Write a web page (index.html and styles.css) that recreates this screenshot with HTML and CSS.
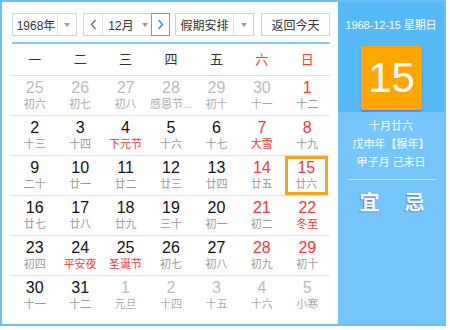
FILE: index.html
```html
<!DOCTYPE html>
<html lang="zh-CN">
<head>
<meta charset="utf-8">
<link rel="stylesheet" href="styles.css">
</head>
<body>
<div class="cal">
  <div class="main">
    <div class="toolbar">
      <div class="sel year"><span class="val">1968年</span><span class="arr"><i></i></span></div>
      <div class="mgroup">
        <span class="nav prev"><svg width="7" height="11" viewBox="0 0 7 11"><polyline points="5.5,1 1.5,5.5 5.5,10" fill="none" stroke="#666" stroke-width="1.2"/></svg></span>
        <span class="mval">12月<i></i></span>
        <span class="nav next"><svg width="7" height="11" viewBox="0 0 7 11"><polyline points="1.5,1 5.5,5.5 1.5,10" fill="none" stroke="#2a8ef0" stroke-width="1.4"/></svg></span>
      </div>
      <div class="sel holiday"><span class="val">假期安排</span><span class="arr"><i></i></span></div>
      <div class="today">返回今天</div>
    </div>
    <div class="bar"></div>
    <div class="weekhead">
      <span>一</span><span>二</span><span>三</span><span>四</span><span>五</span><span class="we">六</span><span class="we">日</span>
    </div>
    <div class="grid">
      <div class="row">
        <div class="cell other"><b>25</b><small>初六</small></div>
        <div class="cell other"><b>26</b><small>初七</small></div>
        <div class="cell other"><b>27</b><small>初八</small></div>
        <div class="cell other"><b>28</b><small>感恩节...</small></div>
        <div class="cell other"><b>29</b><small>初十</small></div>
        <div class="cell other"><b>30</b><small>十一</small></div>
        <div class="cell we"><b>1</b><small>十二</small></div>
      </div>
      <div class="row">
        <div class="cell"><b>2</b><small>十三</small></div>
        <div class="cell"><b>3</b><small>十四</small></div>
        <div class="cell"><b>4</b><small class="fest">下元节</small></div>
        <div class="cell"><b>5</b><small>十六</small></div>
        <div class="cell"><b>6</b><small>十七</small></div>
        <div class="cell we"><b>7</b><small class="fest">大雪</small></div>
        <div class="cell we"><b>8</b><small>十九</small></div>
      </div>
      <div class="row">
        <div class="cell"><b>9</b><small>二十</small></div>
        <div class="cell"><b>10</b><small>廿一</small></div>
        <div class="cell"><b>11</b><small>廿二</small></div>
        <div class="cell"><b>12</b><small>廿三</small></div>
        <div class="cell"><b>13</b><small>廿四</small></div>
        <div class="cell we"><b>14</b><small>廿五</small></div>
        <div class="cell we sel-day"><b>15</b><small>廿六</small></div>
      </div>
      <div class="row">
        <div class="cell"><b>16</b><small>廿七</small></div>
        <div class="cell"><b>17</b><small>廿八</small></div>
        <div class="cell"><b>18</b><small>廿九</small></div>
        <div class="cell"><b>19</b><small>三十</small></div>
        <div class="cell"><b>20</b><small>初一</small></div>
        <div class="cell we"><b>21</b><small>初二</small></div>
        <div class="cell we"><b>22</b><small class="fest">冬至</small></div>
      </div>
      <div class="row">
        <div class="cell"><b>23</b><small>初四</small></div>
        <div class="cell"><b>24</b><small class="fest">平安夜</small></div>
        <div class="cell"><b>25</b><small class="fest">圣诞节</small></div>
        <div class="cell"><b>26</b><small>初七</small></div>
        <div class="cell"><b>27</b><small>初八</small></div>
        <div class="cell we"><b>28</b><small>初九</small></div>
        <div class="cell we"><b>29</b><small>初十</small></div>
      </div>
      <div class="row last">
        <div class="cell"><b>30</b><small>十一</small></div>
        <div class="cell"><b>31</b><small>十二</small></div>
        <div class="cell other"><b>1</b><small>元旦</small></div>
        <div class="cell other"><b>2</b><small>十四</small></div>
        <div class="cell other"><b>3</b><small>十五</small></div>
        <div class="cell other"><b>4</b><small>十六</small></div>
        <div class="cell other"><b>5</b><small>小寒</small></div>
      </div>
    </div>
  </div>
  <div class="side">
    <div class="side-top">
      <div class="date">1968-12-15 星期日</div>
      <div class="bigday">15</div>
    </div>
    <div class="side-bottom">
      <div class="lunar">十月廿六</div>
      <div class="lunar">戊申年【猴年】</div>
      <div class="lunar">甲子月 己未日</div>
      <div class="sep"></div>
      <div class="yiji"><span>宜</span><span>忌</span></div>
    </div>
  </div>
</div>
</body>
</html>
```
FILE: styles.css
```css
* { box-sizing: border-box; }
html, body { margin: 0; padding: 0; background: #fff; }
body {
  font-family: "Liberation Sans", "Noto Sans CJK SC", sans-serif;
  color: #333;
}
.cal {
  width: 446px;
  height: 326px;
  border: 2px solid #6cbff7;
  display: flex;
  background: #fff;
}
.main {
  width: 336px;
  padding: 11px 8px 0 10px;
}
.toolbar {
  display: flex;
  height: 23px;
  font-size: 12px;
}
.sel {
  display: flex;
  border: 1px solid #d4d4d4;
  background: #fff;
  height: 23px;
}
.sel .val {
  display: flex;
  align-items: center;
  justify-content: center;
  border-right: 1px solid #e0e0e0;
}
.sel .arr {
  display: flex;
  align-items: center;
  justify-content: center;
  flex: 1;
}
.sel i, .mval i {
  display: inline-block;
  width: 0; height: 0;
  border-left: 3.5px solid transparent;
  border-right: 3.5px solid transparent;
  border-top: 4px solid #999;
}
.year { width: 65px; }
.year .val { width: 45px; padding-left: 2px; }
.mgroup {
  display: flex;
  margin-left: 6px;
  width: 87px;
  height: 23px;
  border: 1px solid #d4d4d4;
  border-right: none;
  position: relative;
}
.nav {
  display: flex;
  align-items: center;
  justify-content: center;
  width: 19px;
}
.prev { border-right: 1px solid #e0e0e0; width: 19px; }
.mval {
  flex: 1;
  display: flex;
  align-items: center;
  justify-content: center;
  gap: 8px;
  padding-left: 2px;
}
.next {
  border: 1px solid #4aa6f2;
  margin: -1px 0;
  height: 23px;
  width: 19px;
}
.holiday { width: 79px; margin-left: 5px; }
.holiday .val { width: 58px; }
.today {
  margin-left: 7px;
  width: 69px;
  height: 23px;
  border: 1px solid #d4d4d4;
  display: flex;
  align-items: center;
  justify-content: center;
}
.bar {
  height: 2px;
  background: #85c9f6;
  margin-top: 6px;
}
.weekhead {
  display: grid;
  grid-template-columns: repeat(7, 1fr);
  height: 32px;
  border-bottom: 1px solid #dedede;
  font-size: 13px;
  line-height: 31px;
  text-align: center;
  color: #333;
}
.weekhead .we { color: #f33; }
.row {
  display: grid;
  grid-template-columns: repeat(7, 1fr);
  height: 40px;
  border-bottom: 1px solid #e0e0e0;
}
.row.last { border-bottom: none; }
.cell {
  text-align: center;
  padding-top: 3px;
}
.cell b {
  display: block;
  font-weight: normal;
  font-size: 16px;
  line-height: 18px;
  color: #111;
}
.cell small {
  display: block;
  font-size: 11px;
  line-height: 14px;
  color: #999;
  white-space: nowrap;
  overflow: hidden;
}
.cell.we b { color: #f33; }
.cell.other b { color: #bbb; }
.cell.other small { color: #aaa; }
.cell small.fest { color: #f33; }
.cell.sel-day {
  border: 3px solid #f9a318;
  padding-top: 0;
  height: 39px;
  margin-right: 2px;
}
.side {
  flex: 1;
  display: flex;
  flex-direction: column;
  color: #fff;
  text-align: center;
}
.side-top {
  background: #56b9f8;
  height: 110px;
  padding-top: 15px;
}
.date {
  font-size: 11px;
  line-height: 16px;
  letter-spacing: -0.1px;
}
.bigday {
  margin: 13px auto 0;
  width: 61px;
  height: 64px;
  background: #ffa602;
  border-radius: 2px;
  box-shadow: 0 2px 2px rgba(90, 90, 210, 0.6);
  font-size: 42px;
  line-height: 64px;
  padding-left: 1px;
}
.side-bottom {
  flex: 1;
  background: #75c5fb;
  padding-top: 5px;
}
.lunar {
  font-size: 11px;
  line-height: 18px;
}
.sep {
  height: 1px;
  background: rgba(255, 255, 255, 0.55);
  margin: 8px 7px 0 9px;
}
.yiji {
  display: flex;
  justify-content: center;
  gap: 25px;
  margin-top: 11px;
  font-size: 20px;
  line-height: 24px;
  font-weight: bold;
  padding-left: 2px;
}
.yiji span { text-shadow: -1px 1px 1px rgba(100, 90, 230, 0.7); }
```
